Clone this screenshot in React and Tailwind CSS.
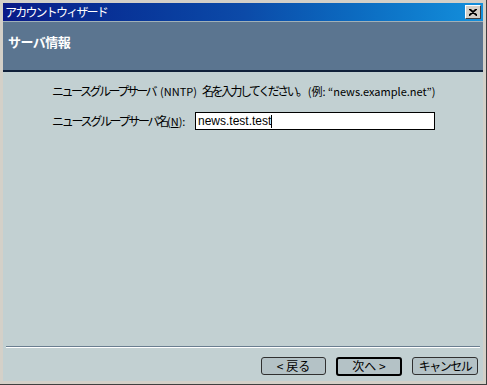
export default function App() {
  const jp = { fontFamily: '"Noto Sans CJK JP", "Liberation Sans", sans-serif' };
  return (
    <div className="w-[487px] h-[385px] bg-[#d4d0c8] p-[3px] flex flex-col border-r border-b border-[#404040]" style={jp}>
      {/* title bar */}
      <div className="h-[18px] flex items-center justify-between pl-[2px] pr-[2px] bg-gradient-to-r from-[#0a1a88] via-[#0c4aa8] to-[#1490dc]">
        <span className="text-white text-[12px] leading-none tracking-[-1.8px]">アカウントウィザード</span>
        <div className="w-[16px] h-[14px] bg-[#d4d0c8] border border-t-white border-l-white border-r-[#404040] border-b-[#404040] flex items-center justify-center">
          <svg width="8" height="7" viewBox="0 0 8 7">
            <path d="M0 0 L8 7 M1 0 L8 6 M8 0 L0 7 M7 0 L0 6" stroke="#000" strokeWidth="1.2" />
          </svg>
        </div>
      </div>
      <div className="flex-1 flex flex-col border-t border-[#a0b0b8]">
        {/* header */}
        <div className="h-[50px] bg-[#5b7590] border-b-2 border-[#10203a] px-[5px] pt-[6px]">
          <span className="text-white text-[13px] font-bold tracking-[-0.5px]">サーバ情報</span>
        </div>
        {/* body */}
        <div className="flex-1 bg-[#c2d0d2] flex flex-col">
          <div className="flex-1 pl-[49px] pt-[11px] text-[12px] text-black whitespace-nowrap">
            <div className="leading-[16px] tracking-[-2.5px]">
              ニュースグループサーバ<span className="tracking-normal text-[11px] mx-[5px]">(NNTP)</span>名を入力してください。<span className="tracking-normal text-[11px] ml-[2px]">(例: “news.example.net”)</span>
            </div>
            <div className="flex items-center mt-[13px]">
              <span className="w-[143px] shrink-0 tracking-[-2.3px]">ニュースグループサーバ名<span className="tracking-normal text-[11px]">(<u>N</u>):</span></span>
              <div className="w-[240px] h-[18px] bg-white border border-black flex items-center px-[2px]">
                <span className="text-[12px]" style={{ fontFamily: '"Liberation Sans", sans-serif' }}>news.test.test</span>
                <span className="w-px h-[13px] bg-black"></span>
              </div>
            </div>
          </div>
          <div className="border-t border-[#6a7e90] border-b border-b-white mx-[3px]"></div>
          <div className="h-[33px] flex items-center justify-end gap-[10px] pr-[5px] pt-[3px]">
            <button className="w-[65px] h-[18px] rounded-[3px] border border-[#303030] bg-[#b4c2c6] text-[12px] leading-none">&lt; 戻る</button>
            <button className="w-[66px] h-[19px] rounded-[3px] border-2 border-black bg-[#b4c2c6] text-[12px] leading-none">次へ &gt;</button>
            <button className="w-[66px] h-[18px] rounded-[3px] border border-[#303030] bg-[#b4c2c6] text-[12px] leading-none tracking-[-1.5px]">キャンセル</button>
          </div>
        </div>
      </div>
    </div>
  );
}
